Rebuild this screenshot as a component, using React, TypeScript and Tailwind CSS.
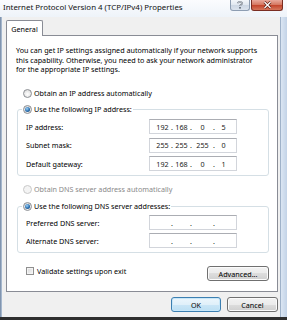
import React from "react";

function Radio({ checked = false, disabled = false }: { checked?: boolean; disabled?: boolean }) {
  return (
    <div
      className={`w-[9px] h-[9px] rounded-full border flex items-center justify-center shrink-0 ${
        disabled
          ? "border-[#c9c9c9] bg-[#f4f4f4]"
          : "border-[#8c8f94] bg-[radial-gradient(circle_at_50%_60%,#ffffff,#e6e6e6_60%,#cfcfcf)]"
      }`}
    >
      {checked && (
        <div className="w-[5px] h-[5px] rounded-full bg-[radial-gradient(circle_at_40%_35%,#9fd2f7,#2a6fb0_55%,#0e3560)]" />
      )}
    </div>
  );
}

function IpBox({ parts }: { parts: string[] }) {
  const widths = ["w-[15px]", "w-[15px]", "w-[19px]", "w-[15px]"];
  return (
    <div className="w-[88px] h-[15px] border border-[#d2d5db] border-t-[#abadb3] bg-white flex items-center pl-[5px] text-[#1a1a1a]">
      {parts.map((p, i) => (
        <React.Fragment key={i}>
          <span className={`${widths[i]} text-center`}>{p}</span>
          {i < 3 && <span className="w-[4px] text-center">.</span>}
        </React.Fragment>
      ))}
    </div>
  );
}

function Row({ label, parts }: { label: string; parts: string[] }) {
  return (
    <div className="flex items-center h-[15px]">
      <div className="w-[123px]">{label}</div>
      <IpBox parts={parts} />
    </div>
  );
}

const btn =
  "h-[15px] rounded-[3px] border border-[#707070] bg-[linear-gradient(#f2f2f2,#ebebeb_50%,#dddddd_50%,#cfcfcf)] shadow-[inset_0_0_0_1px_#fbfbfb] flex items-center justify-center";

export default function App() {
  return (
    <div className="w-[287px] h-[320px] flex flex-col bg-[#f0f0f0] font-['Noto_Sans',sans-serif] text-[7.2px] leading-[10px] text-black overflow-hidden">
      {/* Title bar */}
      <div className="h-[17px] shrink-0 flex items-start bg-[linear-gradient(#fbfcfe,#eef3f9)]">
        <div className="pl-[3px] pt-[2px] text-[7.9px] text-[#111]">
          Internet Protocol Version 4 (TCP/IPv4) Properties
        </div>
        <div className="ml-auto mr-[4px] flex gap-[1px]">
          <div className="w-[20px] h-[11px] rounded-b-[3px] border border-t-0 border-[#8d9db2] bg-[linear-gradient(#f3f6fa,#e0e7f0_50%,#ccd6e3_50%,#dbe3ee)] flex items-center justify-center">
            <svg width="6" height="8" viewBox="0 0 6 8">
              <path d="M1 2.2 C1 0.6 5 0.6 5 2.4 C5 3.6 3 3.6 3 5" fill="none" stroke="#5a6470" strokeWidth="1.6" />
              <path d="M1 2.2 C1 0.6 5 0.6 5 2.4 C5 3.6 3 3.6 3 5" fill="none" stroke="#f5f7fa" strokeWidth="0.7" />
              <rect x="2.2" y="6" width="1.6" height="1.6" fill="#5a6470" />
            </svg>
          </div>
          <div className="w-[32px] h-[11px] rounded-b-[3px] border border-t-0 border-[#7a2d22] bg-[linear-gradient(#e9a99c,#d67a64_45%,#c4472e_55%,#d5765c)] flex items-center justify-center">
            <svg width="9" height="8" viewBox="0 0 9 8">
              <path d="M1.5 1 L7.5 7 M7.5 1 L1.5 7" stroke="#5b1e14" strokeWidth="2.6" />
              <path d="M1.5 1 L7.5 7 M7.5 1 L1.5 7" stroke="#ffffff" strokeWidth="1.3" />
            </svg>
          </div>
        </div>
      </div>

      <div className="flex flex-1">
        <div className="w-[2px] bg-[linear-gradient(90deg,#6f84a0,#b7c8dc)]" />
        <div className="w-[278px] flex flex-col">
          {/* Tab */}
          <div className="mt-[3px] ml-[4px] w-[37px] h-[16px] -mb-[1px] relative z-10 border border-b-0 border-[#898c95] bg-white flex items-center justify-center rounded-t-[2px]">
            General
          </div>
          {/* Panel */}
          <div className="ml-[4px] w-[272px] h-[257px] border border-[#898c95] bg-white flex flex-col">
            <p className="mt-[10px] ml-[9px] leading-[9.7px]">
              You can get IP settings assigned automatically if your network supports
              <br />
              this capability. Otherwise, you need to ask your network administrator
              <br />
              for the appropriate IP settings.
            </p>

            <div className="mt-[13px] ml-[16px] h-[10px] flex items-center gap-[2px]">
              <Radio />
              <span>Obtain an IP address automatically</span>
            </div>

            <fieldset className="mt-[6px] ml-[10px] mr-[8px] border border-[#d5dfe5] rounded-[3px] p-0 min-w-0">
              <legend className="ml-[4px] px-[1px]">
                <div className="h-[10px] flex items-center gap-[2px]">
                  <Radio checked />
                  <span>Use the following IP address:</span>
                </div>
              </legend>
              <div className="mt-[5px] pl-[8px] pb-[4px] flex flex-col gap-[3.5px]">
                <Row label="IP address:" parts={["192", "168", "0", "5"]} />
                <Row label="Subnet mask:" parts={["255", "255", "255", "0"]} />
                <Row label="Default gateway:" parts={["192", "168", "0", "1"]} />
              </div>
            </fieldset>

            <div className="mt-[8px] ml-[16px] h-[10px] flex items-center gap-[2px] text-[#8a8a8a]">
              <Radio disabled />
              <span>Obtain DNS server address automatically</span>
            </div>

            <fieldset className="mt-[7px] ml-[10px] mr-[8px] border border-[#d5dfe5] rounded-[3px] p-0 min-w-0">
              <legend className="ml-[4px] px-[1px]">
                <div className="h-[10px] flex items-center gap-[2px]">
                  <Radio checked />
                  <span>Use the following DNS server addresses:</span>
                </div>
              </legend>
              <div className="mt-[4px] pl-[8px] pb-[4px] flex flex-col gap-[3px]">
                <Row label="Preferred DNS server:" parts={["", "", "", ""]} />
                <Row label="Alternate DNS server:" parts={["", "", "", ""]} />
              </div>
            </fieldset>

            <div className="mt-[13px] ml-[19px] mr-[8px] flex items-start">
              <div className="h-[10px] flex items-center gap-[3px]">
                <div className="w-[8px] h-[8px] border border-[#8f8f8f] bg-[linear-gradient(135deg,#d8d8d8,#f6f6f6)] shadow-[inset_0_0_0_1px_#f4f4f4]" />
                <span>Validate settings upon exit</span>
              </div>
              <div className={`${btn} ml-auto w-[62px]`}>Advanced...</div>
            </div>
          </div>

          {/* Buttons */}
          <div className="mt-[5px] mr-[2px] flex justify-end gap-[6px]">
            <div className="w-[50px] h-[15px] rounded-[3px] border border-[#3c7fb1] bg-[linear-gradient(#ecf6fc,#e0f0fa_50%,#cbe6f7_50%,#bcdff3)] shadow-[inset_0_0_0_1px_#c7e7f9] flex items-center justify-center">
              OK
            </div>
            <div className={`${btn} w-[51px]`}>Cancel</div>
          </div>
        </div>
        <div className="w-[7px] border-l border-[#9fb2c9] bg-[linear-gradient(90deg,#dbe6f3,#c3d3e7)]" />
      </div>
      <div className="h-[3px] shrink-0 bg-[#2e2e2e]" />
    </div>
  );
}
